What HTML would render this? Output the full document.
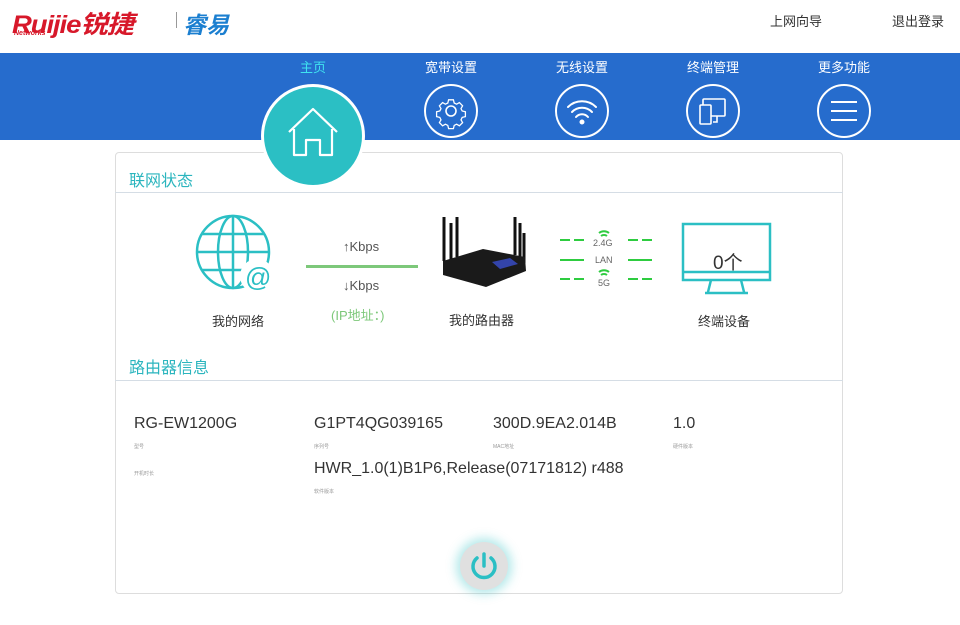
<!DOCTYPE html>
<html><head><meta charset="utf-8"><style>
*{margin:0;padding:0;box-sizing:border-box}
body{width:960px;height:625px;background:#fff;font-family:"Liberation Sans","Noto Sans CJK SC",sans-serif;position:relative;overflow:hidden;color:#333}
.a{position:absolute}
.nav{left:0;top:53px;width:960px;height:87px;background:#266ccd}
.nt{color:#fff;font-size:13px;top:57px;width:100px;text-align:center}
.ic{width:54px;height:54px;border:2px solid #fff;border-radius:50%;top:84px}
.card{left:115px;top:152px;width:728px;height:442px;border:1px solid #ddd;border-radius:4px}
.h{color:#2bb5be;font-size:16px}
.ln{height:1px;background:#d5dde5;left:115px;width:728px}
.v{font-size:16px;color:#333}
.s{font-size:5px;color:#999}
</style></head><body>
<div class="a" style="left:12px;top:5px;font-size:25px;font-weight:bold;font-style:italic;color:#d7182a;letter-spacing:-1px;transform:scaleX(1.1);transform-origin:left">Ruijie锐捷</div>
<div class="a" style="left:14px;top:30px;font-size:7px;font-weight:bold;font-style:italic;color:#d7182a">Networks</div>
<div class="a" style="left:176px;top:12px;width:1px;height:16px;background:#999"></div>
<div class="a" style="left:183px;top:6px;font-size:23px;font-weight:bold;font-style:italic;color:#1b7fd0">睿易</div>
<div class="a" style="left:770px;top:11px;font-size:13px;color:#333">上网向导</div>
<div class="a" style="left:892px;top:11px;font-size:13px;color:#333">退出登录</div>
<div class="a nav"></div>
<div class="a nt" style="left:263px;color:#3fe3f0">主页</div>
<div class="a nt" style="left:401px">宽带设置</div>
<div class="a nt" style="left:532px">无线设置</div>
<div class="a nt" style="left:663px">终端管理</div>
<div class="a nt" style="left:794px">更多功能</div>
<div class="a card"></div>
<div class="a ic" style="left:424px"><svg width="50" height="50" viewBox="0 0 50 50" fill="none" stroke="#fff" stroke-width="1.6"><circle cx="25" cy="25" r="5"/><path d="M22 11h6l1 4 3 1.5 3.5-2 4 4-2 3.5 1.5 3 4 1v6l-4 1-1.5 3 2 3.5-4 4-3.5-2-3 1.5-1 4h-6l-1-4-3-1.5-3.5 2-4-4 2-3.5-1.5-3-4-1v-6l4-1 1.5-3-2-3.5 4-4 3.5 2 3-1.5z" transform="translate(25 25) scale(.8) translate(-25 -25)"/></svg></div>
<div class="a ic" style="left:555px"><svg width="50" height="50" viewBox="0 0 50 50" fill="none" stroke="#fff" stroke-width="2" stroke-linecap="round"><path d="M11 21a20 20 0 0 1 28 0M15 26a14 14 0 0 1 20 0M19 31a8 8 0 0 1 12 0"/><circle cx="25" cy="36" r="1.5" fill="#fff"/></svg></div>
<div class="a ic" style="left:686px"><svg width="50" height="50" viewBox="0 0 50 50" fill="none" stroke="#fff" stroke-width="1.6"><rect x="15" y="13" width="22" height="17" rx="1"/><rect x="12" y="19" width="11" height="19" rx="1" fill="#266ccd"/><path d="M29 30v6h-4"/></svg></div>
<div class="a ic" style="left:817px"><svg width="50" height="50" viewBox="0 0 50 50" stroke="#fff" stroke-width="2"><path d="M12 16h26M12 25h26M12 34h26"/></svg></div>
<div class="a" style="left:261px;top:84px;width:104px;height:104px;border-radius:50%;background:#fff"></div>
<div class="a" style="left:264px;top:87px;width:98px;height:98px;border-radius:50%;background:#2bbfc4"><svg width="98" height="98" viewBox="0 0 98 98" fill="none" stroke="#fff" stroke-width="2.2" stroke-linejoin="round"><path d="M25 45L49 22 73 45M30 42v26h12V53h14v15h12V42"/></svg></div>
<div class="a h" style="left:129px;top:167px">联网状态</div>
<div class="a ln" style="top:192px"></div>
<svg class="a" style="left:195px;top:214px" width="82" height="82" viewBox="0 0 82 82" fill="none" stroke="#2bbfc4" stroke-width="2.5"><circle cx="38" cy="38" r="36"/><ellipse cx="38" cy="38" rx="15" ry="36"/><path d="M38 2v72M2 38h72M7 20h62M7 56h62"/><circle cx="62" cy="62" r="17" fill="#fff" stroke="none"/><text x="50" y="72" font-size="26" fill="#2bbfc4" stroke="none" font-family="Liberation Sans">@</text></svg>
<div class="a" style="left:212px;top:311px;font-size:13px">我的网络</div>
<div class="a" style="left:343px;top:239px;font-size:13px;color:#555">↑Kbps</div>
<div class="a" style="left:306px;top:265px;width:112px;height:3px;background:#7dc87a"></div>
<div class="a" style="left:343px;top:278px;font-size:13px;color:#555">↓Kbps</div>
<div class="a" style="left:331px;top:305px;font-size:13px;color:#7dc87a">(IP地址：)</div>
<svg class="a" style="left:440px;top:215px" width="90" height="80" viewBox="0 0 90 80"><g stroke="#111" stroke-width="3"><path d="M4 2v44M11 8v38M17 2v40M75 2v38M80 8v42M84 18v30"/></g><path d="M3 46l40-12 42 8 1 14-40 16-43-12z" fill="#1a1a1a"/><path d="M52 47l18-4 8 6-18 5z" fill="#3344aa"/></svg>
<div class="a" style="left:449px;top:310px;font-size:13px">我的路由器</div>
<svg class="a" style="left:560px;top:228px" width="92" height="62" viewBox="0 0 92 62" stroke="#2ecc40" stroke-width="2"><path d="M0 12h10M14 12h10M68 12h10M82 12h10M0 32h24M68 32h24M0 51h10M14 51h10M68 51h10M82 51h10" /><g fill="none"><path d="M39 5a8 8 0 0 1 10 0M41 8a5 5 0 0 1 6 0M39 44a8 8 0 0 1 10 0M41 47a5 5 0 0 1 6 0"/></g></svg>
<div class="a" style="left:593px;top:238px;font-size:9px;color:#666">2.4G</div>
<div class="a" style="left:595px;top:255px;font-size:9px;color:#666">LAN</div>
<div class="a" style="left:598px;top:278px;font-size:9px;color:#666">5G</div>
<svg class="a" style="left:681px;top:222px" width="92" height="74" viewBox="0 0 92 74" fill="none" stroke="#2bbfc4" stroke-width="2.5"><rect x="2" y="2" width="87" height="56"/><path d="M2 50h87M30 58l-3 12M60 58l3 12M24 71h43"/></svg>
<div class="a" style="left:713px;top:248px;font-size:19px">0个</div>
<div class="a" style="left:698px;top:311px;font-size:13px">终端设备</div>
<div class="a h" style="left:129px;top:354px">路由器信息</div>
<div class="a ln" style="top:380px"></div>
<div class="a v" style="left:134px;top:415px">RG-EW1200G</div>
<div class="a v" style="left:314px;top:415px">G1PT4QG039165</div>
<div class="a v" style="left:493px;top:415px">300D.9EA2.014B</div>
<div class="a v" style="left:673px;top:415px">1.0</div>
<div class="a s" style="left:134px;top:443px">型号</div>
<div class="a s" style="left:314px;top:443px">序列号</div>
<div class="a s" style="left:493px;top:443px">MAC地址</div>
<div class="a s" style="left:673px;top:443px">硬件版本</div>
<div class="a s" style="left:134px;top:470px">开机时长</div>
<div class="a v" style="left:314px;top:460px">HWR_1.0(1)B1P6,Release(07171812) r488</div>
<div class="a s" style="left:314px;top:488px">软件版本</div>
<div class="a" style="left:460px;top:542px;width:48px;height:48px;border-radius:50%;background:#e0e0e0;box-shadow:0 0 10px 4px rgba(43,191,196,.35)"><svg width="48" height="48" viewBox="0 0 48 48" fill="none" stroke="#2bbfc4" stroke-width="3.5" stroke-linecap="round"><path d="M24 12v12M17 16a11 11 0 1 0 14 0"/></svg></div>
</body></html>
